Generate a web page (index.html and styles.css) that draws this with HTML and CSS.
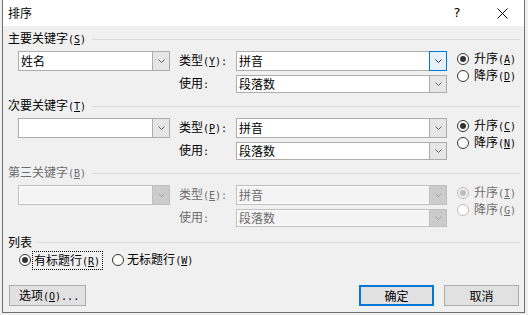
FILE: index.html
```html
<!DOCTYPE html>
<html lang="zh-CN">
<head>
<meta charset="utf-8">
<title>排序</title>
<link rel="stylesheet" href="styles.css">
</head>
<body>
<div class="win">
  <div class="titlebar">
    <span class="title">排序</span>
    <span class="help">?</span>
    <span class="close"><svg width="11" height="11" viewBox="0 0 11 11"><path d="M0.5 0.5 L10.5 10.5 M10.5 0.5 L0.5 10.5" stroke="#000" stroke-width="1" fill="none"/></svg></span>
  </div>
  <div class="body">
    <section class="group">
      <div class="legend"><span>主要关键字<span class="k">(<u>S</u>)</span></span><i class="rule"></i></div>
      <div class="grid">
        <div class="combo"><span class="val">姓名</span><span class="arrow"><svg width="7" height="4" viewBox="0 0 7 4"><path d="M0.5 0.5 L3.5 3.5 L6.5 0.5" stroke="#606060" fill="none"/></svg></span></div>
        <span class="lbl">类型<span class="k">(<u>Y</u>):</span></span>
        <div class="combo focus"><span class="val">拼音</span><span class="arrow"><svg width="7" height="4" viewBox="0 0 7 4"><path d="M0.5 0.5 L3.5 3.5 L6.5 0.5" stroke="#333" fill="none"/></svg></span></div>
        <div class="radios">
          <div class="radio on"><i class="dot"></i><span>升序<span class="k">(<u>A</u>)</span></span></div>
          <div class="radio"><i class="dot"></i><span>降序<span class="k">(<u>D</u>)</span></span></div>
        </div>
        <span class="lbl row2">使用<span class="k">:</span></span>
        <div class="combo short row2"><span class="val">段落数</span><span class="arrow"><svg width="7" height="4" viewBox="0 0 7 4"><path d="M0.5 0.5 L3.5 3.5 L6.5 0.5" stroke="#606060" fill="none"/></svg></span></div>
      </div>
    </section>

    <section class="group">
      <div class="legend"><span>次要关键字<span class="k">(<u>T</u>)</span></span><i class="rule"></i></div>
      <div class="grid">
        <div class="combo"><span class="val"></span><span class="arrow"><svg width="7" height="4" viewBox="0 0 7 4"><path d="M0.5 0.5 L3.5 3.5 L6.5 0.5" stroke="#606060" fill="none"/></svg></span></div>
        <span class="lbl">类型<span class="k">(<u>P</u>):</span></span>
        <div class="combo"><span class="val">拼音</span><span class="arrow"><svg width="7" height="4" viewBox="0 0 7 4"><path d="M0.5 0.5 L3.5 3.5 L6.5 0.5" stroke="#606060" fill="none"/></svg></span></div>
        <div class="radios">
          <div class="radio on"><i class="dot"></i><span>升序<span class="k">(<u>C</u>)</span></span></div>
          <div class="radio"><i class="dot"></i><span>降序<span class="k">(<u>N</u>)</span></span></div>
        </div>
        <span class="lbl row2">使用<span class="k">:</span></span>
        <div class="combo short row2"><span class="val">段落数</span><span class="arrow"><svg width="7" height="4" viewBox="0 0 7 4"><path d="M0.5 0.5 L3.5 3.5 L6.5 0.5" stroke="#606060" fill="none"/></svg></span></div>
      </div>
    </section>

    <section class="group disabled">
      <div class="legend"><span>第三关键字<span class="k">(<u>B</u>)</span></span><i class="rule"></i></div>
      <div class="grid">
        <div class="combo"><span class="val"></span><span class="arrow"><svg width="7" height="4" viewBox="0 0 7 4"><path d="M0.5 0.5 L3.5 3.5 L6.5 0.5" stroke="#a0a0a0" fill="none"/></svg></span></div>
        <span class="lbl">类型<span class="k">(<u>E</u>):</span></span>
        <div class="combo"><span class="val">拼音</span><span class="arrow"><svg width="7" height="4" viewBox="0 0 7 4"><path d="M0.5 0.5 L3.5 3.5 L6.5 0.5" stroke="#a0a0a0" fill="none"/></svg></span></div>
        <div class="radios">
          <div class="radio on"><i class="dot"></i><span>升序<span class="k">(<u>I</u>)</span></span></div>
          <div class="radio"><i class="dot"></i><span>降序<span class="k">(<u>G</u>)</span></span></div>
        </div>
        <span class="lbl row2">使用<span class="k">:</span></span>
        <div class="combo short row2"><span class="val">段落数</span><span class="arrow"><svg width="7" height="4" viewBox="0 0 7 4"><path d="M0.5 0.5 L3.5 3.5 L6.5 0.5" stroke="#a0a0a0" fill="none"/></svg></span></div>
      </div>
    </section>

    <section class="list">
      <div class="legend"><span>列表</span><i class="rule"></i></div>
      <div class="list-row">
        <div class="radio on"><i class="dot"></i><span class="focus-rect">有标题行<span class="k">(<u>R</u>)</span></span></div>
        <div class="radio second"><i class="dot"></i><span>无标题行<span class="k">(<u>W</u>)</span></span></div>
      </div>
    </section>

    <div class="buttons">
      <button class="btn options">选项<span class="k">(<u>O</u>)...</span></button>
      <span class="spacer"></span>
      <button class="btn default">确定</button>
      <button class="btn">取消</button>
    </div>
  </div>
</div>
</body>
</html>
```

FILE: styles.css
```css
html, body {
  margin: 0;
  padding: 0;
}
body {
  background: #f0f0f0;
  font-family: "Noto Sans CJK SC", "Noto Sans", sans-serif;
  font-size: 12px;
  line-height: 14px;
  color: #000;
}
u {
  text-decoration: underline;
  text-underline-offset: 1px;
}
.k {
  font-family: "DejaVu Sans Mono", monospace;
  font-size: 10px;
}
.win {
  margin-left: 2px;
  width: 523px;
  height: 313px;
  box-sizing: border-box;
  border: 1px solid #6f6f6f;
  border-top: none;
  background: #f0f0f0;
  display: flex;
  flex-direction: column;
}
.titlebar {
  height: 26px;
  background: #fff;
  display: flex;
  align-items: center;
  padding-left: 5px;
}
.title {
  flex: 1;
}
.help {
  width: 46px;
  text-align: center;
  font-family: "DejaVu Sans", sans-serif;
  font-size: 13px;
}
.close {
  width: 44px;
  display: flex;
  justify-content: center;
  align-items: center;
}
.body {
  padding: 6px 4px 0 5px;
  display: flex;
  flex-direction: column;
  flex: 1;
}
.legend {
  height: 14px;
  display: flex;
  align-items: center;
}
.rule {
  flex: 1;
  height: 1px;
  background: #dadada;
  margin-left: 6px;
}
.group {
  height: 67px;
}
.grid {
  margin: 5px 0 0 10px;
  display: grid;
  grid-template-columns: 152px 48px 211px 1fr;
  grid-template-rows: 20px 18px;
  column-gap: 9px;
  row-gap: 4px;
  align-items: center;
}
.row2 {
  grid-row: 2;
}
.lbl {
  grid-column: 2;
  white-space: nowrap;
}
.combo.row2 {
  grid-column: 3;
}
.combo {
  box-sizing: border-box;
  height: 20px;
  border: 1px solid #adadad;
  background: #fff;
  display: flex;
  align-items: stretch;
}
.combo.short {
  height: 18px;
}
.val {
  flex: 1;
  padding-left: 2px;
  display: flex;
  align-items: center;
}
.arrow {
  width: 16px;
  border-left: 1px solid #adadad;
  background: #e6e6e6;
  display: flex;
  align-items: center;
  justify-content: center;
}
.focus .arrow {
  margin: -1px -1px -1px 0;
  border: 1px solid #0078d7;
  background: #e5f1fb;
}
.radios {
  grid-column: 4;
  grid-row: 1 / span 2;
  align-self: start;
  margin-top: -1px;
  margin-left: 1px;
}
.radio {
  height: 17px;
  display: flex;
  align-items: center;
  white-space: nowrap;
}
.dot {
  box-sizing: border-box;
  width: 12px;
  height: 12px;
  border: 1px solid #333;
  border-radius: 50%;
  background: #fff;
  margin-right: 5px;
  display: flex;
  align-items: center;
  justify-content: center;
}
.radio.on .dot::after {
  content: "";
  width: 6px;
  height: 6px;
  border-radius: 50%;
  background: #333;
}
.disabled {
  color: #6d6d6d;
}
.disabled .combo {
  border-color: #bfbfbf;
  background: #f4f4f4;
  box-shadow: inset 0 0 0 1px #fff;
}
.disabled .arrow {
  background: #cccccc;
  border-left-color: #bfbfbf;
}
.disabled .dot {
  border-color: #bcbcbc;
}
.disabled .radio.on .dot {
  background: #f0f0f0;
}
.disabled .radio.on .dot::after {
  background: #bcbcbc;
}
.list {
  margin-top: 2px;
}
.list-row {
  margin: 3px 0 0 11px;
  height: 16px;
  display: flex;
  align-items: center;
}
.list-row .radio {
  height: 16px;
}
.list-row .dot {
  margin-right: 2px;
}
.focus-rect {
  outline: 1px dotted #000;
  padding: 1px 2px 0 1px;
}
.radio.second {
  margin-left: 10px;
}
.radio.second .dot {
  margin-right: 3px;
}
.buttons {
  margin-top: 17px;
  display: flex;
  padding-left: 1px;
  padding-right: 1px;
  gap: 10px;
}
.spacer {
  flex: 1;
}
.btn {
  box-sizing: border-box;
  height: 21px;
  width: 75px;
  border: 1px solid #adadad;
  background: #e1e1e1;
  font: inherit;
  color: #000;
  padding: 0;
}
.btn.options {
  width: 77px;
  text-align: left;
  padding-left: 9px;
}
.btn.default {
  border: 2px solid #0078d7;
}
```
